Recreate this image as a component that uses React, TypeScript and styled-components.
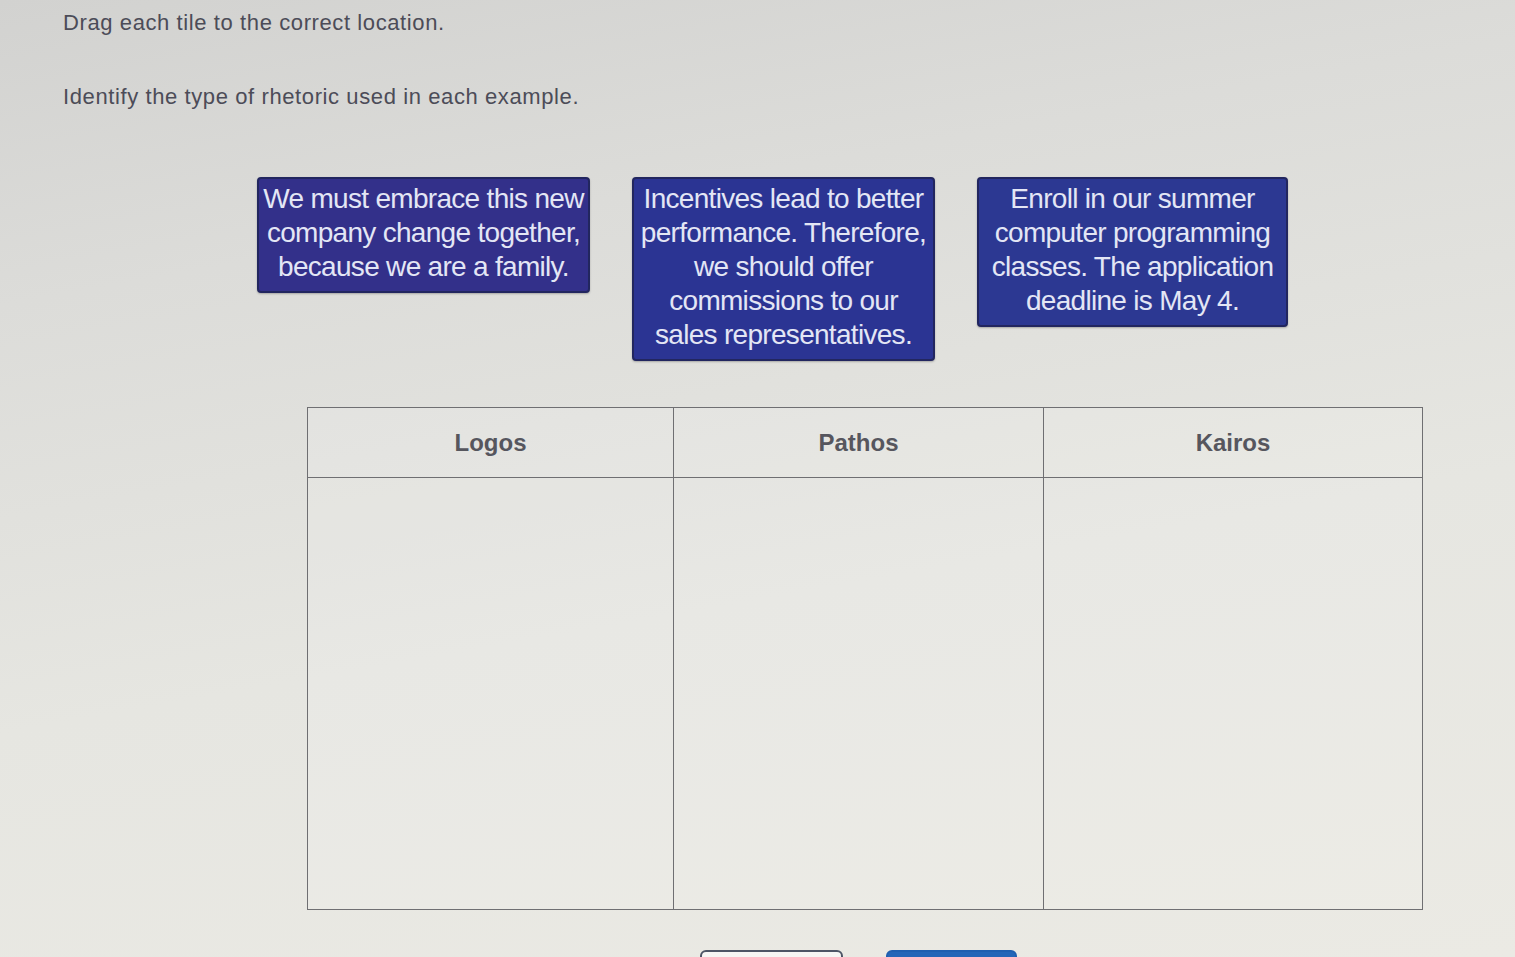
import styled, { createGlobalStyle } from 'styled-components';

const GlobalStyle = createGlobalStyle`
  html, body {
    margin: 0;
    padding: 0;
  }
  body {
    height: 957px;
    overflow: hidden;
    font-family: 'Liberation Sans', Arial, sans-serif;
    background: linear-gradient(170deg, #d2d2d0 0%, #dcdcd9 25%, #e6e6e1 60%, #ebeae4 100%);
  }
`;

const Page = styled.div`
  height: 957px;
  padding: 11px 0 0 63px;
  box-sizing: border-box;
  overflow: hidden;
`;

const Instruction = styled.p<{ $gap?: number }>`
  margin: ${(p) => p.$gap ?? 0}px 0 0;
  font-size: 22px;
  line-height: 24px;
  color: #4c4c58;
  letter-spacing: 0.6px;
`;

const TileRow = styled.div`
  display: flex;
  align-items: flex-start;
  gap: 42px;
  margin: 68px 0 0 194px;
`;

const Tile = styled.div<{ $width: number; $tint: string }>`
  width: ${(p) => p.$width}px;
  box-sizing: border-box;
  padding: 3px 0 7px;
  background: ${(p) => p.$tint};
  border: 2px solid #22265f;
  border-radius: 4px;
  color: #e3e6f5;
  font-size: 28px;
  line-height: 34px;
  letter-spacing: -0.7px;
  text-align: center;
  white-space: nowrap;
  box-shadow: 0 1px 2px rgba(0, 0, 0, 0.25);
`;

const Board = styled.div`
  display: grid;
  grid-template-columns: 366px 370px 378px;
  grid-template-rows: 70px 431px;
  margin: 46px 0 0 244px;
  width: max-content;
  border: 1.5px solid #6f6f72;
`;

const HeaderCell = styled.div<{ $last?: boolean }>`
  display: flex;
  align-items: center;
  justify-content: center;
  font-size: 24px;
  font-weight: 700;
  color: #56565e;
  border-right: ${(p) => (p.$last ? 'none' : '1.5px solid #6f6f72')};
  border-bottom: 1.5px solid #6f6f72;
  background: rgba(255, 255, 255, 0.12);
`;

const DropCell = styled.div<{ $last?: boolean }>`
  border-right: ${(p) => (p.$last ? 'none' : '1.5px solid #6f6f72')};
  background: rgba(255, 255, 255, 0.1);
`;

const ButtonRow = styled.div`
  display: flex;
  gap: 43px;
  margin: 40px 0 0 637px;
`;

const ActionButton = styled.button<{ $primary?: boolean }>`
  width: ${(p) => (p.$primary ? 131 : 143)}px;
  height: 36px;
  border-radius: 6px;
  border: 2px solid ${(p) => (p.$primary ? '#1f5fb0' : '#4d5566')};
  background: ${(p) => (p.$primary ? '#2466b8' : '#f6f6f4')};
`;

const tiles = [
  {
    width: 333,
    tint: '#33308a',
    lines: ['We must embrace this new', 'company change together,', 'because we are a family.'],
  },
  {
    width: 303,
    tint: '#2b3493',
    lines: [
      'Incentives lead to better',
      'performance. Therefore,',
      'we should offer',
      'commissions to our',
      'sales representatives.',
    ],
  },
  {
    width: 311,
    tint: '#2c3892',
    lines: ['Enroll in our summer', 'computer programming', 'classes. The application', 'deadline is May 4.'],
  },
];

const columns = ['Logos', 'Pathos', 'Kairos'];

export default function App() {
  return (
    <>
      <GlobalStyle />
      <Page>
        <Instruction>Drag each tile to the correct location.</Instruction>
        <Instruction $gap={50}>Identify the type of rhetoric used in each example.</Instruction>

        <TileRow>
          {tiles.map((t, i) => (
            <Tile key={i} $width={t.width} $tint={t.tint}>
              {t.lines.map((line) => (
                <div key={line}>{line}</div>
              ))}
            </Tile>
          ))}
        </TileRow>

        <Board>
          {columns.map((c, i) => (
            <HeaderCell key={c} $last={i === columns.length - 1}>
              {c}
            </HeaderCell>
          ))}
          {columns.map((c, i) => (
            <DropCell key={c} $last={i === columns.length - 1} />
          ))}
        </Board>

        {/* reset / next controls sit just below the fold */}
        <ButtonRow>
          <ActionButton aria-label="Reset" />
          <ActionButton aria-label="Next" $primary />
        </ButtonRow>
      </Page>
    </>
  );
}
